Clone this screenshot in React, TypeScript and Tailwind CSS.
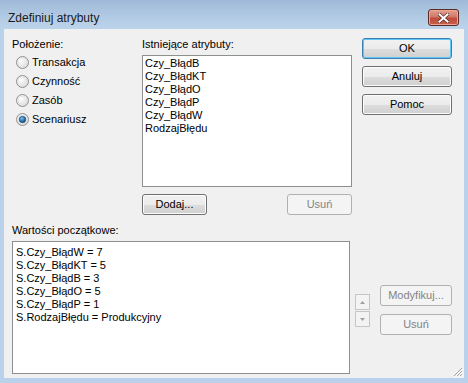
import React from 'react'

const font = "font-['Liberation_Sans',Tahoma,sans-serif]"

function Radio({ label, checked }: { label: string; checked?: boolean }) {
  return (
    <div className="flex items-center h-[19px] pl-[4px] gap-[3px]">
      <svg width="13" height="13" viewBox="0 0 13 13">
        <defs>
          <radialGradient id="rf" cx="0.35" cy="0.35" r="0.8">
            <stop offset="0" stopColor="#ffffff" />
            <stop offset="1" stopColor="#d4d4d4" />
          </radialGradient>
          <radialGradient id="rd" cx="0.4" cy="0.35" r="0.7">
            <stop offset="0" stopColor="#7fc0ea" />
            <stop offset="0.6" stopColor="#2a6fa8" />
            <stop offset="1" stopColor="#0c3b66" />
          </radialGradient>
        </defs>
        <circle cx="6.5" cy="6.5" r="6" fill="url(#rf)" stroke="#8f8f8f" />
        <circle cx="6.5" cy="6.5" r="4.5" fill="none" stroke="#e4e4e4" />
        {checked && <circle cx="6.5" cy="6.5" r="3.3" fill="url(#rd)" stroke="#1c4f7c" strokeWidth="0.6" />}
      </svg>
      <span className="text-[11px] leading-[13px] text-black">{label}</span>
    </div>
  )
}

function Btn({ children, w, disabled, primary }: { children: React.ReactNode; w: string; disabled?: boolean; primary?: boolean }) {
  if (disabled) {
    return (
      <div className={`${w} h-[21px] rounded-[3px] border border-[#adb2b5] bg-[#f4f4f4] flex items-center justify-center text-[11px] text-[#838383]`}>
        {children}
      </div>
    )
  }
  return (
    <div
      className={`${w} h-[21px] rounded-[3px] border ${primary ? 'border-[#3c7fb1] shadow-[inset_0_0_0_1px_#5fc6f5]' : 'border-[#707070] shadow-[inset_0_0_0_1px_#fcfcfc]'} bg-[linear-gradient(#f2f2f2_0%,#ebebeb_50%,#dddddd_51%,#cfcfcf_100%)] flex items-center justify-center text-[11px] text-black`}
    >
      {children}
    </div>
  )
}

function SpinBtn({ up }: { up?: boolean }) {
  return (
    <div className="w-[15px] h-[16px] border border-[#c5c5c5] bg-[#f3f3f3] flex items-center justify-center">
      <svg width="5" height="3" viewBox="0 0 5 3">
        <polygon points={up ? '2.5,0 5,3 0,3' : '0,0 5,0 2.5,3'} fill="#a0a0a0" />
      </svg>
    </div>
  )
}

export default function App() {
  const existing = ['Czy_BłądB', 'Czy_BłądKT', 'Czy_BłądO', 'Czy_BłądP', 'Czy_BłądW', 'RodzajBłędu']
  const values = [
    'S.Czy_BłądW = 7',
    'S.Czy_BłądKT = 5',
    'S.Czy_BłądB = 3',
    'S.Czy_BłądO = 5',
    'S.Czy_BłądP = 1',
    'S.RodzajBłędu = Produkcyjny',
  ]

  return (
    <div className={`w-[468px] h-[383px] flex flex-col bg-[#b9d1ea] ${font}`}>
      {/* Title bar */}
      <div className="h-[29px] flex items-start justify-between bg-[linear-gradient(#9fbad8,#b6cde6_70%,#bcd3ec)] pl-[8px] pr-[9px]">
        <span className="mt-[11px] text-[12px] leading-[14px] text-[#1b1b1b]">Zdefiniuj atrybuty</span>
        <div className="mt-[9px] w-[31px] h-[17px] rounded-[3px] border border-[#5b2a24] bg-[linear-gradient(#e3a090_0%,#d0786a_45%,#c04b3a_55%,#c9614a_100%)] shadow-[inset_0_0_0_1px_#eba899] flex items-center justify-center">
          <svg width="11" height="10" viewBox="0 0 11 10">
            <path d="M1.5 1.5 L9.5 8.5 M9.5 1.5 L1.5 8.5" stroke="#5a2a24" strokeWidth="3.4" strokeLinecap="square" />
            <path d="M1.5 1.5 L9.5 8.5 M9.5 1.5 L1.5 8.5" stroke="#ffffff" strokeWidth="2" strokeLinecap="square" />
          </svg>
        </div>
      </div>

      {/* Client area */}
      <div className="relative mx-[4px] h-[349px] bg-[#f0f0f0] flex flex-col px-[8px] pt-[9px]">
        <div className="flex">
          {/* Położenie */}
          <div className="w-[130px] flex flex-col">
            <span className="text-[11px] leading-[13px] text-black">Położenie:</span>
            <div className="mt-[2px] flex flex-col">
              <Radio label="Transakcja" />
              <Radio label="Czynność" />
              <Radio label="Zasób" />
              <Radio label="Scenariusz" checked />
            </div>
          </div>

          {/* Istniejące atrybuty */}
          <div className="w-[210px] flex flex-col">
            <span className="text-[11px] leading-[13px] text-black">Istniejące atrybuty:</span>
            <div className="mt-[4px] h-[132px] border border-[#8e8f8f] bg-white pl-[2px] pt-[1px]">
              {existing.map(e => (
                <div key={e} className="text-[11px] leading-[13px] text-black">{e}</div>
              ))}
            </div>
            <div className="mt-[7px] flex justify-between">
              <Btn w="w-[65px]">Dodaj...</Btn>
              <Btn w="w-[65px]" disabled>Usuń</Btn>
            </div>
          </div>

          {/* Dialog buttons */}
          <div className="ml-[10px] w-[90px] flex flex-col gap-[7px]">
            <Btn w="w-[90px]" primary>OK</Btn>
            <Btn w="w-[90px]">Anuluj</Btn>
            <Btn w="w-[90px]">Pomoc</Btn>
          </div>
        </div>

        {/* Wartości początkowe */}
        <span className="mt-[9px] text-[11px] leading-[13px] text-black">Wartości początkowe:</span>
        <div className="mt-[4px] flex">
          <div className="w-[338px] h-[133px] border border-[#8e8f8f] bg-white pl-[3px] pt-[4px]">
            {values.map(v => (
              <div key={v} className="text-[11px] leading-[13px] text-black">{v}</div>
            ))}
          </div>
          <div className="ml-[5px] mt-[53px] flex flex-col gap-[1px]">
            <SpinBtn up />
            <SpinBtn />
          </div>
          <div className="ml-[10px] mt-[44px] flex flex-col gap-[8px]">
            <Btn w="w-[72px]" disabled>Modyfikuj...</Btn>
            <Btn w="w-[72px]" disabled>Usuń</Btn>
          </div>
        </div>

        {/* Resize grip */}
        <svg className="absolute right-[1px] bottom-[1px]" width="11" height="11" viewBox="0 0 11 11">
          <path d="M10 2 L2 10 M10 5 L5 10 M10 8 L8 10" stroke="#a0a0a0" strokeWidth="1" />
          <path d="M11 3 L3 11 M11 6 L6 11 M11 9 L9 11" stroke="#ffffff" strokeWidth="1" />
        </svg>
      </div>
    </div>
  )
}
